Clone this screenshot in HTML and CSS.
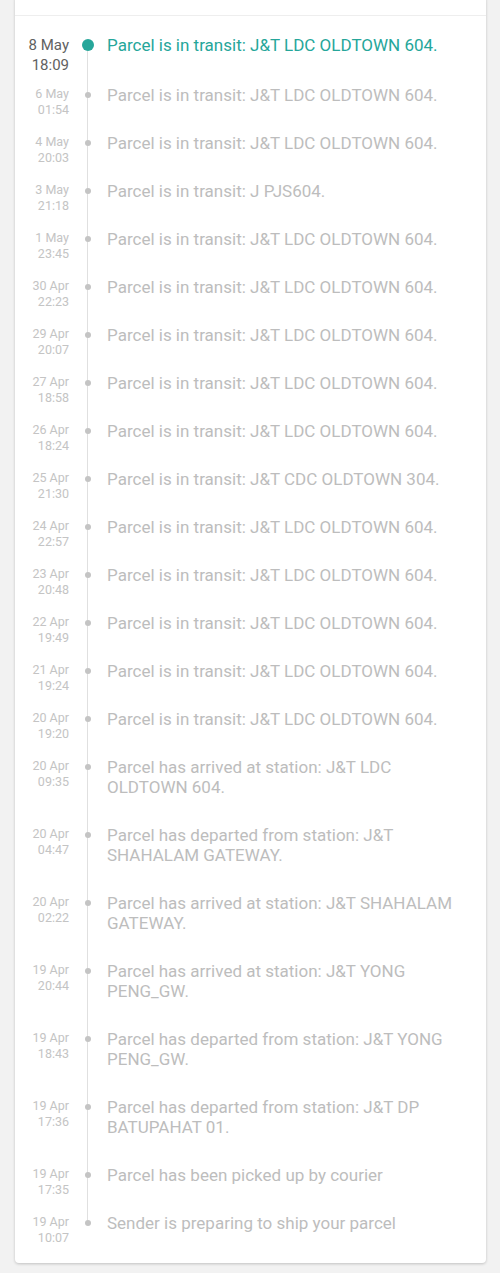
FILE: index.html
```html
<!DOCTYPE html>
<html>
<head>
    <title>Tracking</title>
    <link rel="stylesheet" href="styles.css">
</head>
<body>
    <div class="card">
        <div class="card-head"></div>
        <ul class="timeline">
            <li class="step active">
                <div class="when">8 May<br>18:09</div>
                <div class="mark"><span class="dot"></span></div>
                <div class="what">Parcel is in transit: J&amp;T LDC OLDTOWN 604.</div>
            </li>
            <li class="step">
                <div class="when">6 May<br>01:54</div>
                <div class="mark"><span class="dot"></span></div>
                <div class="what">Parcel is in transit: J&amp;T LDC OLDTOWN 604.</div>
            </li>
            <li class="step">
                <div class="when">4 May<br>20:03</div>
                <div class="mark"><span class="dot"></span></div>
                <div class="what">Parcel is in transit: J&amp;T LDC OLDTOWN 604.</div>
            </li>
            <li class="step">
                <div class="when">3 May<br>21:18</div>
                <div class="mark"><span class="dot"></span></div>
                <div class="what">Parcel is in transit: J PJS604.</div>
            </li>
            <li class="step">
                <div class="when">1 May<br>23:45</div>
                <div class="mark"><span class="dot"></span></div>
                <div class="what">Parcel is in transit: J&amp;T LDC OLDTOWN 604.</div>
            </li>
            <li class="step">
                <div class="when">30 Apr<br>22:23</div>
                <div class="mark"><span class="dot"></span></div>
                <div class="what">Parcel is in transit: J&amp;T LDC OLDTOWN 604.</div>
            </li>
            <li class="step">
                <div class="when">29 Apr<br>20:07</div>
                <div class="mark"><span class="dot"></span></div>
                <div class="what">Parcel is in transit: J&amp;T LDC OLDTOWN 604.</div>
            </li>
            <li class="step">
                <div class="when">27 Apr<br>18:58</div>
                <div class="mark"><span class="dot"></span></div>
                <div class="what">Parcel is in transit: J&amp;T LDC OLDTOWN 604.</div>
            </li>
            <li class="step">
                <div class="when">26 Apr<br>18:24</div>
                <div class="mark"><span class="dot"></span></div>
                <div class="what">Parcel is in transit: J&amp;T LDC OLDTOWN 604.</div>
            </li>
            <li class="step">
                <div class="when">25 Apr<br>21:30</div>
                <div class="mark"><span class="dot"></span></div>
                <div class="what">Parcel is in transit: J&amp;T CDC OLDTOWN 304.</div>
            </li>
            <li class="step">
                <div class="when">24 Apr<br>22:57</div>
                <div class="mark"><span class="dot"></span></div>
                <div class="what">Parcel is in transit: J&amp;T LDC OLDTOWN 604.</div>
            </li>
            <li class="step">
                <div class="when">23 Apr<br>20:48</div>
                <div class="mark"><span class="dot"></span></div>
                <div class="what">Parcel is in transit: J&amp;T LDC OLDTOWN 604.</div>
            </li>
            <li class="step">
                <div class="when">22 Apr<br>19:49</div>
                <div class="mark"><span class="dot"></span></div>
                <div class="what">Parcel is in transit: J&amp;T LDC OLDTOWN 604.</div>
            </li>
            <li class="step">
                <div class="when">21 Apr<br>19:24</div>
                <div class="mark"><span class="dot"></span></div>
                <div class="what">Parcel is in transit: J&amp;T LDC OLDTOWN 604.</div>
            </li>
            <li class="step">
                <div class="when">20 Apr<br>19:20</div>
                <div class="mark"><span class="dot"></span></div>
                <div class="what">Parcel is in transit: J&amp;T LDC OLDTOWN 604.</div>
            </li>
            <li class="step">
                <div class="when">20 Apr<br>09:35</div>
                <div class="mark"><span class="dot"></span></div>
                <div class="what">Parcel has arrived at station: J&amp;T LDC OLDTOWN 604.</div>
            </li>
            <li class="step">
                <div class="when">20 Apr<br>04:47</div>
                <div class="mark"><span class="dot"></span></div>
                <div class="what">Parcel has departed from station: J&amp;T SHAHALAM GATEWAY.</div>
            </li>
            <li class="step">
                <div class="when">20 Apr<br>02:22</div>
                <div class="mark"><span class="dot"></span></div>
                <div class="what">Parcel has arrived at station: J&amp;T SHAHALAM GATEWAY.</div>
            </li>
            <li class="step">
                <div class="when">19 Apr<br>20:44</div>
                <div class="mark"><span class="dot"></span></div>
                <div class="what">Parcel has arrived at station: J&amp;T YONG PENG_GW.</div>
            </li>
            <li class="step">
                <div class="when">19 Apr<br>18:43</div>
                <div class="mark"><span class="dot"></span></div>
                <div class="what">Parcel has departed from station: J&amp;T YONG PENG_GW.</div>
            </li>
            <li class="step">
                <div class="when">19 Apr<br>17:36</div>
                <div class="mark"><span class="dot"></span></div>
                <div class="what">Parcel has departed from station: J&amp;T DP BATUPAHAT 01.</div>
            </li>
            <li class="step">
                <div class="when">19 Apr<br>17:35</div>
                <div class="mark"><span class="dot"></span></div>
                <div class="what">Parcel has been picked up by courier</div>
            </li>
            <li class="step">
                <div class="when">19 Apr<br>10:07</div>
                <div class="mark"><span class="dot"></span></div>
                <div class="what">Sender is preparing to ship your parcel</div>
            </li>
        </ul>
    </div>
</body>
</html>
```
FILE: styles.css
```css
html {
    background-color: #f2f2f2;
    padding: 0;
    margin: 0;
}

body {
    margin: 0;
    padding: 0 14px 12px 15px;
    font-family: Roboto, "Liberation Sans", sans-serif;
}

.card {
    margin-top: -4px;
    background-color: #fff;
    border-radius: 4px;
    box-shadow: 0 1px 3px rgba(0, 0, 0, 0.2);
}

.card-head {
    height: 19px;
    border-bottom: 1px solid #eeeeee;
}

.timeline {
    list-style: none;
    margin: 0;
    padding: 19px 0 2px 0;
}

.step {
    display: grid;
    grid-template-columns: 54px 38px 1fr;
}

.when {
    text-align: right;
    font-size: 12.5px;
    line-height: 16px;
    color: #c4c4c4;
    padding-top: 1px;
}

.mark {
    position: relative;
}

    .mark::before {
        content: "";
        position: absolute;
        left: 18px;
        top: 10px;
        bottom: -10px;
        width: 1px;
        background-color: #e0e0e0;
    }

.step:last-child .mark::before {
    display: none;
}

.dot {
    position: absolute;
    left: 16px;
    top: 7px;
    width: 6px;
    height: 6px;
    border-radius: 50%;
    background-color: #c4c4c4;
}

.what {
    font-size: 17px;
    line-height: 20px;
    color: #bdbdbd;
    padding: 0 29px 28px 0;
}

.step.active .when {
    font-size: 15px;
    line-height: 20px;
    color: #616161;
    padding-top: 0;
}

.step.active .dot {
    left: 13px;
    top: 4px;
    width: 12px;
    height: 12px;
    background-color: #26a69a;
    z-index: 1;
}

.step.active .what {
    color: #26a69a;
    padding-bottom: 30px;
}
```
